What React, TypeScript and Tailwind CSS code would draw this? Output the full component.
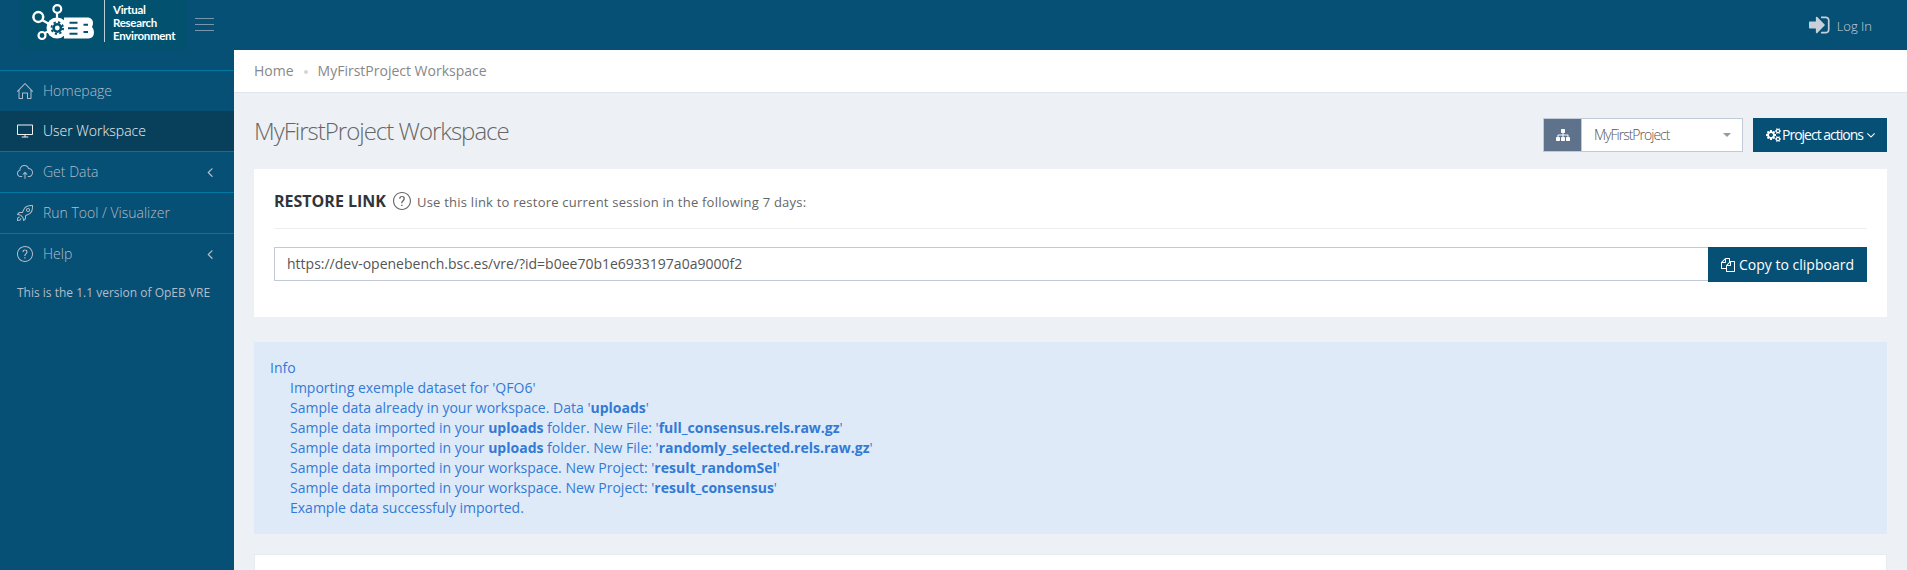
import React from "react";
import { SlHome, SlScreenDesktop, SlCloudUpload, SlRocket, SlQuestion } from "react-icons/sl";

type IconProps = { d: string; className: string; viewBox?: string };

function Glyph({ d, className, viewBox = "0 0 1792 1792" }: IconProps) {
  return (
    <svg viewBox={viewBox} className={className} fill="currentColor" aria-hidden="true">
      <path d={d} />
    </svg>
  );
}

const SIGN_IN =
  "M1184 896q0 26-19 45l-544 544q-19 19-45 19t-45-19-19-45v-288h-448q-26 0-45-19t-19-45v-384q0-26 19-45t45-19h448v-288q0-26 19-45t45-19 45 19l544 544q19 19 19 45zm352-352v704q0 119-84.5 203.5t-203.5 84.5h-320q-13 0-22.5-9.5t-9.5-22.5q0-4-1-20t-.5-26.5 3-23.5 10-19.5 20.5-6.5h320q66 0 113-47t47-113v-704q0-66-47-113t-113-47h-312l-11.5-1-11.5-3-8-5.5-7-9-2-13.5q0-4-1-20t-.5-26.5 3-23.5 10-19.5 20.5-6.5h320q119 0 203.5 84.5t84.5 203.5z";
const FILES =
  "M1696 384q40 0 68 28t28 68v1216q0 40-28 68t-68 28h-960q-40 0-68-28t-28-68v-288h-544q-40 0-68-28t-28-68v-672q0-40 20-88t48-76l408-408q28-28 76-48t88-20h416q40 0 68 28t28 68v328q68-40 128-40h416zm-544 213l-299 299h299v-299zm-640-384l-299 299h299v-299zm196 647l316-316v-416h-384v416q0 40-28 68t-68 28h-416v640h512v-256q0-40 20-88t48-76zm956 804v-1152h-384v416q0 40-28 68t-68 28h-416v640h896z";
const SITEMAP =
  "M1792 1248v320q0 40-28 68t-68 28h-320q-40 0-68-28t-28-68v-320q0-40 28-68t68-28h96v-192h-512v192h96q40 0 68 28t28 68v320q0 40-28 68t-68 28h-320q-40 0-68-28t-28-68v-320q0-40 28-68t68-28h96v-192h-512v192h96q40 0 68 28t28 68v320q0 40-28 68t-68 28h-320q-40 0-68-28t-28-68v-320q0-40 28-68t68-28h96v-192q0-52 38-90t90-38h512v-192h-96q-40 0-68-28t-28-68v-320q0-40 28-68t68-28h320q40 0 68 28t28 68v320q0 40-28 68t-68 28h-96v192h512q52 0 90 38t38 90v192h96q40 0 68 28t28 68z";
const COGS =
  "M896 896q0-106-75-181t-181-75-181 75-75 181 75 181 181 75 181-75 75-181zm768 512q0-52-38-90t-90-38-90 38-38 90q0 53 37.5 90.5t90.5 37.5 90.5-37.5 37.5-90.5zm0-1024q0-52-38-90t-90-38-90 38-38 90q0 53 37.5 90.5t90.5 37.5 90.5-37.5 37.5-90.5zm-384 421v185q0 10-7 19.5t-16 10.5l-155 24q-11 35-32 76 34 48 90 115 7 11 7 20 0 12-7 19-23 30-82.5 89.5t-78.5 59.5q-11 0-21-7l-115-90q-37 19-77 31-11 108-23 155-7 24-30 24h-186q-11 0-20-7.5t-10-17.5l-23-153q-34-10-75-31l-118 89q-7 7-20 7-11 0-21-8-144-133-144-160 0-9 7-19 10-14 41-53t47-61q-23-44-35-82l-152-24q-10-1-17-9.5t-7-19.5v-185q0-10 7-19.5t16-10.5l155-24q11-35 32-76-34-48-90-115-7-11-7-20 0-12 7-20 22-30 82-89t79-59q11 0 21 7l115 90q34-18 77-32 11-108 23-154 7-24 30-24h186q11 0 20 7.5t10 17.5l23 153q34 10 75 31l118-89q8-7 20-7 11 0 21 8 144 133 144 160 0 8-7 19-12 16-42 54t-45 60q23 48 34 82l152 23q10 2 17 10.5t7 19.5zm640 533v140q0 16-149 31-12 27-30 52 51 113 51 138 0 4-4 7-122 71-124 71-8 0-46-47t-52-68q-20 2-30 2t-30-2q-14 21-52 68t-46 47q-2 0-124-71-4-3-4-7 0-25 51-138-18-25-30-52-149-15-149-31v-140q0-16 149-31 13-29 30-52-51-113-51-138 0-4 4-7 4-2 35-20t59-34 30-16q8 0 46 46.5t52 67.5q20-2 30-2t30 2q51-71 92-112l6-2q4 0 124 70 4 3 4 7 0 25-51 138 17 23 30 52 149 15 149 31zm0-1024v140q0 16-149 31-12 27-30 52 51 113 51 138 0 4-4 7-122 71-124 71-8 0-46-47t-52-68q-20 2-30 2t-30-2q-14 21-52 68t-46 47q-2 0-124-71-4-3-4-7 0-25 51-138-18-25-30-52-149-15-149-31v-140q0-16 149-31 13-29 30-52-51-113-51-138 0-4 4-7 4-2 35-20t59-34 30-16q8 0 46 46.5t52 67.5q20-2 30-2t30 2q51-71 92-112l6-2q4 0 124 70 4 3 4 7 0 25-51 138 17 23 30 52 149 15 149 31z";
const ANGLE_DOWN =
  "M1395 736q0 13-10 23l-466 466q-10 10-23 10t-23-10l-466-466q-10-10-10-23t10-23l50-50q10-10 23-10t23 10l393 393 393-393q10-10 23-10t23 10l50 50q10 10 10 23z";
const ANGLE_LEFT =
  "M1203 544q0 13-10 23l-393 393 393 393q10 10 10 23t-10 23l-50 50q-10 10-23 10t-23-10l-466-466q-10-10-10-23t10-23l466-466q10-10 23-10t23 10l50 50q10 10 10 23z";

function Logo() {
  return (
    <div className="ml-[19px] flex h-[50px] w-[168px] bg-[#02526f]">
      <svg width="90" height="50" viewBox="19 0 90 50" fill="none" aria-hidden="true">
        <g stroke="#fff">
          <path d="M57 13v7M42 20l8 4.500M44 33.500l6-3" strokeWidth="2.2" />
          <circle cx="57.300" cy="9" r="3.900" strokeWidth="2.200" />
          <circle cx="38.300" cy="17" r="4.900" strokeWidth="2.500" />
          <circle cx="42" cy="35.500" r="3.500" strokeWidth="2.200" />
        </g>
        <circle cx="57" cy="28" r="10.500" fill="#fff" />
        <path d="M64 17.500h24.500q4.500 1 4.500 5.500q0 2.500-1 4q2 2 2 5q0 6-5.500 6.500H64z" fill="#fff" />
        <circle cx="57.300" cy="28" r="5.800" stroke="#02526f" strokeWidth="1.900" strokeDasharray="2.300 2.255" />
        <circle cx="57.300" cy="28" r="3.700" stroke="#02526f" strokeWidth="2.600" />
        <path d="M77.500 22.700H69.500M77.500 28.200H68M77.500 33.700H69.500M83.500 24.700h4.500M83.500 32h4.500" stroke="#02526f" strokeWidth="1.900" />
        <path d="M104.500 0v42" stroke="#b9d0d9" strokeWidth="1" />
      </svg>
      <div className="ml-[4px] mt-[3px] font-['Lato','Liberation_Sans',sans-serif] text-[11.5px] font-bold leading-[13px] tracking-[-0.3px] text-white">
        <div>Virtual</div>
        <div>Research</div>
        <div>Environment</div>
      </div>
    </div>
  );
}

const NAV = [
  { label: "Homepage", Icon: SlHome },
  { label: "User Workspace", Icon: SlScreenDesktop, active: true },
  { label: "Get Data", Icon: SlCloudUpload, sub: true },
  { label: "Run Tool / Visualizer", Icon: SlRocket },
  { label: "Help", Icon: SlQuestion, sub: true },
];

function Sidebar() {
  return (
    <aside className="w-[234px] shrink-0 bg-[#075075] pt-5">
      <nav>
        {NAV.map(({ label, Icon, active, sub }) => (
          <a
            key={label}
            className={
              active
                ? "flex h-10 items-center bg-[#08405c] pl-[17px] pr-4 text-[#f1f1f1]"
                : "flex h-[41px] items-center border-t border-[#0077a0] pl-[17px] pr-4 text-[#b4bcc8]"
            }
          >
            <Icon className="size-4 shrink-0" />
            <span className="ml-[10px] flex-1 text-sm font-light">{label}</span>
            {sub && <Glyph d={ANGLE_LEFT} className="size-4" />}
          </a>
        ))}
      </nav>
      <p className="pl-[17px] pt-[10px] text-xs leading-[18px] text-[#b4bcc8]">This is the 1.1 version of OpEB VRE</p>
    </aside>
  );
}

const B = ({ children }: { children: React.ReactNode }) => <b className="font-bold">{children}</b>;

export default function App() {
  return (
    <div className="flex h-[570px] w-full flex-col overflow-hidden bg-[#edf1f5] font-['Open_Sans',sans-serif] text-sm text-[#333]">
      <header className="flex h-[50px] shrink-0 items-start bg-[#075075]">
        <Logo />
        <div className="ml-[8px] mt-[18px] flex w-[19px] flex-col gap-[5px]">
          <i className="h-px bg-[#7897ae]" />
          <i className="h-px bg-[#7897ae]" />
          <i className="h-px bg-[#7897ae]" />
        </div>
        <a className="ml-auto mr-[35px] flex h-[50px] items-center text-[13px] font-light text-[#c6cfda]">
          <Glyph d={SIGN_IN} className="size-[24px]" />
          <span className="ml-1 mt-[2px]">Log In</span>
        </a>
      </header>
      <div className="flex min-h-0 flex-1">
        <Sidebar />
        <main className="min-w-0 flex-1">
          <div className="flex h-[43px] items-center border-b border-[#e0e6e9] bg-white pl-5 text-[#888]">
            <span>Home</span>
            <i className="mx-[10px] mt-px size-[4px] rounded-full bg-[#d5d5d5]" />
            <span>MyFirstProject Workspace</span>
          </div>
          <div className="px-5">
            <div className="flex h-[76px] items-start justify-between pt-[25px]">
              <h1 className="-mt-px text-2xl font-light leading-[28px] tracking-[-1px] text-[#666]">MyFirstProject Workspace</h1>
              <div className="flex gap-[10px] font-light tracking-[-1px]">
                <div className="flex h-[34px] w-[200px] border border-[#c2cad8] bg-white">
                  <span className="flex w-[38px] items-center justify-center border-r border-[#c2cad8] bg-[#5e738b] text-white">
                    <Glyph d={SITEMAP} className="size-[14px]" />
                  </span>
                  <span className="flex flex-1 items-center justify-between pl-3 pr-[11px] text-[#555]">
                    MyFirstProject
                    <i className="border-x-4 border-t-4 border-x-transparent border-t-[#999]" />
                  </span>
                </div>
                <button className="flex h-[34px] w-[134px] items-center bg-[#075075] pl-[13px] font-normal tracking-[-1px] text-white">
                  <Glyph d={COGS} viewBox="0 0 1920 1792" className="mr-px h-[14px] w-[15px] shrink-0" />
                  <span className="whitespace-nowrap">Project actions</span>
                  <Glyph d={ANGLE_DOWN} className="ml-px size-[14px] shrink-0" />
                </button>
              </div>
            </div>
            <section className="h-[148px] bg-white px-5">
              <div className="flex h-[60px] items-center border-b border-[#eee] pt-[5px]">
                <h2 className="text-base font-bold leading-6 text-[#2f353b]">RESTORE LINK</h2>
                <SlQuestion className="ml-[7px] size-[18px] text-[#666]" />
                <span className="ml-[6px] mt-[3px] text-[13px] tracking-[0.23px] text-[#666]">Use this link to restore current session in the following 7 days:</span>
              </div>
              <div className="mt-[18px] flex items-start">
                <div className="flex h-[34px] flex-1 items-center border border-r-0 border-[#c2cad8] px-3 text-[#555]">
                  https://dev-openebench.bsc.es/vre/?id=b0ee70b1e6933197a0a9000f2
                </div>
                <button className="flex h-[35px] w-[159px] items-center justify-center bg-[#075075] text-white">
                  <Glyph d={FILES} className="mr-1 size-[14px]" />
                  Copy to clipboard
                </button>
              </div>
            </section>
            <section className="mt-[25px] h-[192px] bg-[#dfeaf8] px-4 pt-4 leading-5 text-[#327ad5]">
              <div>Info</div>
              <div className="pl-5">
                <p>Importing exemple dataset for 'QFO6'</p>
                <p>Sample data already in your workspace. Data '<B>uploads</B>'</p>
                <p>Sample data imported in your <B>uploads</B> folder. New File: '<B>full_consensus.rels.raw.gz</B>'</p>
                <p>Sample data imported in your <B>uploads</B> folder. New File: '<B>randomly_selected.rels.raw.gz</B>'</p>
                <p>Sample data imported in your workspace. New Project: '<B>result_randomSel</B>'</p>
                <p>Sample data imported in your workspace. New Project: '<B>result_consensus</B>'</p>
                <p>Example data successfuly imported.</p>
              </div>
            </section>
            <section className="mt-5 h-20 border border-[#e7ecf1] bg-white" />
          </div>
        </main>
      </div>
    </div>
  );
}
